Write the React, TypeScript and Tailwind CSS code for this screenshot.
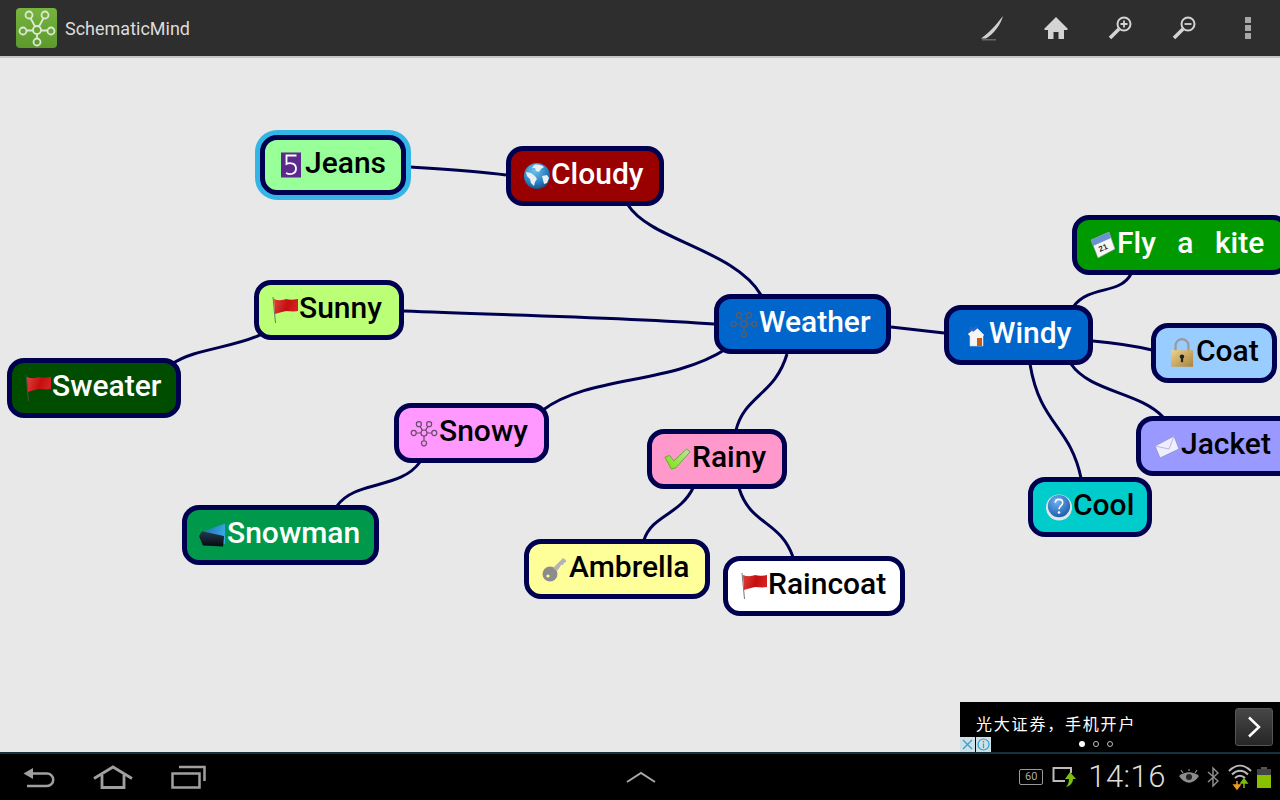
import React from "react";

const Net = ({ c = "#5f5f5f" }: { c?: string }) => (
  <svg viewBox="0 0 30 30" className="w-[30px] h-[30px] -ml-[2px]" fill="none" stroke={c} strokeWidth="1.3">
    <circle cx="15" cy="15" r="3.2" />
    <circle cx="9.5" cy="5.5" r="2.7" />
    <circle cx="20.5" cy="5.5" r="2.7" />
    <circle cx="4" cy="15" r="2.7" />
    <circle cx="26" cy="15" r="2.7" />
    <circle cx="15" cy="26" r="2.7" />
    <path d="M13.4 12.2 10.8 8M16.6 12.2 19.2 8M11.8 15H6.7M18.2 15h5.1M15 18.2v5.1" />
  </svg>
);
const Five = () => (
  <svg viewBox="0 0 26 26" className="w-[26px] h-[26px]">
    <rect x="3" y="0.5" width="20" height="25" fill="#5b2a8c" />
    <path d="M18.5 3.5H8.5V12c3.5-1.6 9.5-1 9.5 4.5 0 6-6.500 6.500-10 4.500" fill="none" stroke="#fff" strokeWidth="1.8" />
  </svg>
);
const Globe = () => (
  <svg viewBox="0 0 26 26" className="w-[26px] h-[26px]">
    <defs>
      <radialGradient id="gl" cx="0.4" cy="0.3" r="0.8">
        <stop offset="0" stopColor="#6cc4ee" />
        <stop offset="0.6" stopColor="#2a80c4" />
        <stop offset="1" stopColor="#10426f" />
      </radialGradient>
    </defs>
    <circle cx="13" cy="13" r="13" fill="url(#gl)" />
    <path d="M10 2c4-1 8 0 10 2l-3 2-2 3-3-1-1-3-3 0zM2 9l5 1 4 3 2 3-2 3-1 4-3-3-1-4-3-3zM18 13l5-1 2 3-2 5-3 1-1-4z" fill="#e8eef2" />
  </svg>
);
const Flag = () => (
  <svg viewBox="0 0 26 26" className="w-[26px] h-[26px]">
    <defs>
      <linearGradient id="fl" x1="0" y1="0" x2="1" y2="0.2">
        <stop offset="0" stopColor="#e04040" />
        <stop offset="0.6" stopColor="#c40f0f" />
        <stop offset="1" stopColor="#d42020" />
      </linearGradient>
    </defs>
    <path d="M1 0 3.500 26" stroke="#555" strokeWidth="0.8" />
    <path d="M2 2c5 2 9 1 12 0 3 1 7 1 12 0v12c-5 1-8 0-12 0-4 1-8 2-11 3z" fill="url(#fl)" />
  </svg>
);
const HomeIc = () => (
  <svg viewBox="0 0 26 26" className="w-[26px] h-[26px]">
    <path d="M6 12 14 5l8 8-1 1v10H8V14z" fill="#f4f4f4" stroke="#cfd8e6" strokeWidth="0.6" />
    <path d="M6 12 10 8.500V5H7.500v5z" fill="#2d62c8" />
    <path d="M9 6.500 14 4.500 16 6l-5 4z" fill="#2d62c8" />
    <rect x="15" y="16" width="5" height="8" fill="#c85a14" />
  </svg>
);
const Cal = () => (
  <svg viewBox="0 0 26 26" className="w-[26px] h-[26px]">
    <path d="M1 8 19 0l6 17-17 9z" fill="#f6f6f6" stroke="#999" strokeWidth="0.6" />
    <path d="M1 8 19 0l2 6-18 8z" fill="#6b93cf" />
    <text x="9" y="19" fontSize="8" fontFamily="Liberation Sans" fontWeight="700" fill="#333" transform="rotate(-24 12 17)">21</text>
  </svg>
);
const Lock = () => (
  <svg viewBox="0 0 26 32" className="w-[24px] h-[32px] mb-[2px]">
    <defs>
      <linearGradient id="lk" x1="0" y1="0" x2="1" y2="1">
        <stop offset="0" stopColor="#edd28c" />
        <stop offset="1" stopColor="#a9823c" />
      </linearGradient>
    </defs>
    <path d="M6 16V9a7 7 0 0 1 14 0v7" fill="none" stroke="#9a9a9a" strokeWidth="2.400" />
    <rect x="1" y="14" width="24" height="18" fill="url(#lk)" />
    <circle cx="13" cy="21" r="2.400" fill="#222" />
    <rect x="11.800" y="21" width="2.400" height="6" fill="#222" />
  </svg>
);
const Env = () => (
  <svg viewBox="0 0 26 26" className="w-[26px] h-[26px]">
    <path d="M1 13 20 3l5 13L6 25z" fill="#eeeeff" stroke="#8f8fc8" strokeWidth="0.8" />
    <path d="M1 13 15 16 20 3" fill="none" stroke="#b0b0dc" strokeWidth="0.9" />
  </svg>
);
const Q = () => (
  <svg viewBox="0 0 28 30" className="w-[28px] h-[30px]">
    <defs>
      <radialGradient id="qg" cx="0.4" cy="0.3" r="0.8">
        <stop offset="0" stopColor="#6fb2f0" />
        <stop offset="1" stopColor="#1553a8" />
      </radialGradient>
    </defs>
    <circle cx="14" cy="15.500" r="14" fill="#dfe6ea" />
    <circle cx="14" cy="14" r="12" fill="url(#qg)" />
    <path d="M10 10.500c0-5 8-5 8 0 0 3-4 3-4 7" fill="none" stroke="#fff" strokeWidth="1.700" />
    <circle cx="14" cy="21" r="1.400" fill="#fff" />
  </svg>
);
const Check = () => (
  <svg viewBox="0 0 30 26" className="w-[30px] h-[26px] -ml-[1px]">
    <defs>
      <linearGradient id="ck" x1="0" y1="1" x2="1" y2="0">
        <stop offset="0" stopColor="#7ee010" />
        <stop offset="1" stopColor="#b8e8a0" />
      </linearGradient>
    </defs>
    <path d="M1 11 6 9l5 6L25 2l4 3-16 18-5 1z" fill="url(#ck)" stroke="#4a9c10" strokeWidth="0.8" />
  </svg>
);
const Key = () => (
  <svg viewBox="0 0 26 26" className="w-[26px] h-[26px]">
    <circle cx="8" cy="18" r="7.500" fill="#8c8c8c" />
    <circle cx="6" cy="20" r="1.600" fill="#ffff99" />
    <path d="M11 12 21 2l3 2 0 2-2 1-1 2-2 0-1 2-3 4z" fill="#b4b4b4" />
  </svg>
);
const Folder = () => (
  <svg viewBox="0 0 28 26" className="w-[28px] h-[26px] -ml-[1px]">
    <defs>
      <linearGradient id="fd" x1="0" y1="0" x2="1" y2="0.4">
        <stop offset="0" stopColor="#1c6ea8" />
        <stop offset="1" stopColor="#38a8e8" />
      </linearGradient>
      <linearGradient id="fe" x1="0" y1="0" x2="0" y2="1">
        <stop offset="0" stopColor="#243a50" />
        <stop offset="1" stopColor="#050a10" />
      </linearGradient>
    </defs>
    <path d="M5 9 27 1v21H22z" fill="url(#fd)" />
    <path d="M0 14l3-5 23 5-1 11-21-1z" fill="url(#fe)" />
  </svg>
);

const nodes: { t: string; cls: string; text: string; icon: React.ReactNode; extra?: string; ring?: boolean }[] = [
  { t: "Jeans", cls: "left-[260px] top-[79px] w-[146px] bg-[#99ff99] text-black", text: "", icon: <Five />, ring: true },
  { t: "Cloudy", cls: "left-[506px] top-[90px] w-[158px] bg-[#990000] text-white", text: "", icon: <Globe /> },
  { t: "Sunny", cls: "left-[254px] top-[224px] w-[150px] bg-[#bbff77] text-black", text: "", icon: <Flag /> },
  { t: "Weather", cls: "left-[714px] top-[238px] w-[177px] bg-[#0066cc] text-white", text: "", icon: <Net /> },
  { t: "Windy", cls: "left-[944px] top-[249px] w-[149px] bg-[#0066cc] text-white", text: "", icon: <HomeIc /> },
  { t: "Fly a kite", cls: "left-[1072px] top-[159px] w-[218px] bg-[#009900] text-white [word-spacing:14px]", text: "", icon: <Cal /> },
  { t: "Coat", cls: "left-[1151px] top-[267px] w-[126px] bg-[#99ccff] text-black", text: "", icon: <Lock /> },
  { t: "Jacket", cls: "left-[1136px] top-[360px] w-[160px] bg-[#9999ff] text-black", text: "", icon: <Env /> },
  { t: "Cool", cls: "left-[1028px] top-[421px] w-[124px] bg-[#00cccc] text-black", text: "", icon: <Q /> },
  { t: "Rainy", cls: "left-[647px] top-[373px] w-[140px] bg-[#ff99cc] text-black", text: "", icon: <Check /> },
  { t: "Ambrella", cls: "left-[524px] top-[483px] w-[186px] bg-[#ffff99] text-black", text: "", icon: <Key /> },
  { t: "Raincoat", cls: "left-[723px] top-[500px] w-[182px] bg-white text-black", text: "", icon: <Flag /> },
  { t: "Sweater", cls: "left-[7px] top-[302px] w-[174px] bg-[#004d00] text-white", text: "", icon: <Flag /> },
  { t: "Snowy", cls: "left-[394px] top-[347px] w-[155px] bg-[#ff99ff] text-black", text: "", icon: <Net c="#6b4a6b" /> },
  { t: "Snowman", cls: "left-[182px] top-[449px] w-[197px] bg-[#00994c] text-white", text: "", icon: <Folder /> },
];

const edges = [
  "M411 167C445 169 480 171 506 175",
  "M628 205C650 240 735 250 761 295",
  "M404 311C500 315 620 317 714 324",
  "M262 334C235 348 195 348 172 364",
  "M726 349C670 385 590 375 543 410",
  "M787 354C775 395 745 395 736 430",
  "M891 327C910 329 925 331 944 333",
  "M1074 306C1090 285 1120 295 1131 274",
  "M1093 341C1115 343 1135 346 1152 350",
  "M1071 364C1090 392 1140 392 1163 417",
  "M1030 364C1040 425 1070 425 1081 478",
  "M420 462C400 490 355 480 337 506",
  "M693 488C680 515 652 515 644 540",
  "M739 488C750 525 780 520 793 557",
];

function Node({ n }: { n: (typeof nodes)[number] }) {
  return (
    <div
      className={`absolute h-[60px] box-border flex items-center whitespace-nowrap rounded-[17px] border-[5px] border-[#000050] pl-[13px] ${n.cls} ${
        n.ring ? "shadow-[0_0_0_5px_#33b5e5]" : ""
      }`}
    >
      <span className="w-[26px] h-[26px] mr-[1px] shrink-0 flex items-center justify-center">{n.icon}</span>
      <span className="text-[30px] leading-[36px] font-medium pb-[5px]">{n.t}</span>
    </div>
  );
}

export default function App() {
  return (
    <div className="w-[1280px] h-[800px] flex flex-col overflow-hidden font-['Roboto',sans-serif] bg-black">
      <header className="h-[56px] shrink-0 bg-[#2e2e2e] flex items-center pl-[16px] pr-[29px]">
        <svg viewBox="0 0 41 41" className="w-[41px] h-[41px]">
          <defs>
            <linearGradient id="lg" x1="0" y1="0" x2="0" y2="1">
              <stop offset="0" stopColor="#77b43e" />
              <stop offset="1" stopColor="#5b9a2c" />
            </linearGradient>
          </defs>
          <rect x="0" y="0" width="41" height="40" rx="4" fill="url(#lg)" />
          <g fill="none" stroke="#dfe8d8" strokeWidth="1.800">
            <circle cx="21" cy="22" r="4" />
            <circle cx="13" cy="7" r="3.500" />
            <circle cx="29" cy="7" r="3.500" />
            <circle cx="7" cy="23" r="3.500" />
            <circle cx="35" cy="23" r="3.500" />
            <circle cx="21" cy="34" r="3.500" />
            <path d="M19 18.500 14.500 10M23 18.500 27.500 10M17 22.500H10.500M25 22.500H31.500M21 26v4.500" />
          </g>
        </svg>
        <span className="ml-[8px] text-[18px] text-[#dcdcdc]">SchematicMind</span>
        <div className="ml-auto flex items-center gap-[40px]">
          <svg viewBox="0 0 24 26" className="w-[24px] h-[26px]">
            <path d="M1 23.500C8 19 16 10 23 1c-2 8-9 18-17 22.500z" fill="#d0d0d0" />
            <rect x="2" y="24" width="14" height="1.500" fill="#666" />
          </svg>
          <svg viewBox="0 0 24 24" className="w-[24px] h-[24px]">
            <path d="M12 1 24 13l-1 1h-3v9h-5.500v-7h-5v7H4v-9H1L0 13z" fill="#d4d4d4" />
          </svg>
          <svg viewBox="0 0 24 24" className="w-[24px] h-[24px]" fill="none" stroke="#d4d4d4">
            <circle cx="16" cy="8" r="6.500" strokeWidth="2" />
            <path d="M11 13 2 22" strokeWidth="3.500" />
            <path d="M12.500 8h7M16 4.500v7" strokeWidth="1.800" />
          </svg>
          <svg viewBox="0 0 24 24" className="w-[24px] h-[24px]" fill="none" stroke="#d4d4d4">
            <circle cx="16" cy="8" r="6.500" strokeWidth="2" />
            <path d="M11 13 2 22" strokeWidth="3.500" />
            <path d="M12.500 8h7" strokeWidth="1.800" />
          </svg>
          <div className="ml-[9px] flex flex-col gap-[2px]">
            <div className="w-[6px] h-[6px] bg-[#a8a8a8]" />
            <div className="w-[6px] h-[6px] bg-[#a8a8a8]" />
            <div className="w-[6px] h-[6px] bg-[#a8a8a8]" />
          </div>
        </div>
      </header>

      <main className="relative flex-1 bg-[#e8e8e8] border-t-0 overflow-hidden">
        <div className="h-[2px] bg-[#c4c4c4]" />
        <svg viewBox="0 56 1280 696" className="absolute left-0 top-0 w-[1280px] h-[696px]" fill="none" stroke="#000050" strokeWidth="3">
          {edges.map((d) => (
            <path key={d} d={d} />
          ))}
        </svg>
        {nodes.map((n) => (
          <Node key={n.t} n={n} />
        ))}

        <aside className="absolute right-0 bottom-0 w-[320px] h-[50px] bg-black">
          <div className="absolute left-[16px] top-[11px] text-[16px] leading-[20px] tracking-[1.8px] text-white font-['Noto_Sans_CJK_SC',sans-serif]">
            光大证券，手机开户
          </div>
          <div className="absolute left-[275px] top-[6px] w-[38px] h-[38px] rounded-[3px] border border-[#555] bg-gradient-to-b from-[#474747] to-[#262626] flex items-center justify-center">
            <svg viewBox="0 0 14 22" className="w-[14px] h-[22px]" fill="none" stroke="#fff" strokeWidth="2.500">
              <path d="M2 1.500 12 11 2 20.500" />
            </svg>
          </div>
          <div className="absolute left-[119px] top-[39px] flex items-center gap-[8px]">
            <span className="w-[6px] h-[6px] rounded-full bg-white" />
            <span className="w-[6px] h-[6px] rounded-full border border-[#bbb]" />
            <span className="w-[6px] h-[6px] rounded-full border border-[#bbb]" />
          </div>
          <div className="absolute left-0 bottom-0 flex gap-[1px]">
            <div className="w-[15px] h-[15px] bg-[#cfdfe6] flex items-center justify-center">
              <svg viewBox="0 0 11 11" className="w-[11px] h-[11px]" stroke="#2aa3cf" strokeWidth="1.200">
                <path d="M1 1l9 9M10 1l-9 9" />
              </svg>
            </div>
            <div className="w-[15px] h-[15px] bg-[#cfdfe6] flex items-center justify-center">
              <svg viewBox="0 0 13 13" className="w-[13px] h-[13px]" fill="none" stroke="#2aa3cf" strokeWidth="1.200">
                <circle cx="6.500" cy="6.500" r="5.500" />
                <path d="M6.500 5.500v4.500M6.500 3v1.500" />
              </svg>
            </div>
          </div>
        </aside>
      </main>

      <footer className="h-[48px] shrink-0 bg-black border-t-2 border-[#16323f] flex items-center pl-[23px] pr-[9px]">
        <svg viewBox="0 0 32 21" className="w-[32px] h-[21px]" fill="none" stroke="#a0a0a0" strokeWidth="2.500">
          <path d="M4 6.500H24a6 6 0 0 1 0 12.500H4" />
          <path d="M0.500 6.500 10 1v11z" fill="#a0a0a0" stroke="none" />
        </svg>
        <svg viewBox="0 0 40 24" className="ml-[38px] w-[40px] h-[24px]" fill="none" stroke="#a0a0a0" strokeWidth="2.800">
          <path d="M1 13.500 20 2l19 11.500" />
          <path d="M9 10v12.500h22V10" />
        </svg>
        <svg viewBox="0 0 35 24" className="ml-[38px] w-[35px] h-[24px]" fill="none" stroke="#a0a0a0" strokeWidth="2.500">
          <rect x="1.500" y="8.500" width="27" height="14" />
          <path d="M8 2h25.500v14" />
        </svg>
        <svg viewBox="0 0 30 12" className="ml-[420px] w-[30px] h-[12px]" fill="none" stroke="#a8a8a8" strokeWidth="2">
          <path d="M1 11 15 2l14 9" />
        </svg>
        <div className="ml-auto flex items-center">
          <div className="w-[24px] h-[16px] border border-[#999] rounded-[2px] text-[11px] leading-[14px] text-center text-[#aaa]">60</div>
          <svg viewBox="0 0 24 22" className="ml-[9px] w-[24px] h-[22px]" fill="none">
            <path d="M13 15H1.500V2H19v5" stroke="#bbb" strokeWidth="2" />
            <path d="M18 6l6 7h-3c0 4-3 7-7 8 2-2 3-5 3-8h-4z" fill="#7cbd10" />
          </svg>
          <span className="ml-[12px] text-[31px] leading-[36px] font-light text-[#dcdcdc] tracking-[0.5px]">14:16</span>
          <svg viewBox="0 0 22 16" className="ml-[12px] w-[22px] h-[16px]">
            <path d="M1 7c6-5 14-5 20 0-6 9-14 9-20 0z" fill="#8c8c8c" />
            <circle cx="11" cy="8" r="3" fill="#222" />
            <path d="M3 1l2 3M11 0v2M19 1l-2 3" stroke="#8c8c8c" strokeWidth="1.200" />
          </svg>
          <svg viewBox="0 0 12 22" className="ml-[7px] w-[12px] h-[22px]" fill="none" stroke="#8c8c8c" strokeWidth="1.500">
            <path d="M1 6 11 15 6 20V2l5 5-10 9" />
          </svg>
          <svg viewBox="0 0 24 26" className="ml-[9px] w-[24px] h-[26px]">
            <g fill="none" stroke="#b8b8b8" strokeWidth="2">
              <path d="M1 7c7-7 15-7 22 0M4 10.500c5-5 11-5 16 0M7 14c3-3 7-3 10 0" />
            </g>
            <path d="M9 17v6M6 21l3 4 3-4z" stroke="#f09a20" strokeWidth="1.500" fill="#f09a20" />
            <path d="M16 24v-6M13 19l3-4 3 4z" stroke="#7cbd10" strokeWidth="1.500" fill="#7cbd10" />
          </svg>
          <div className="ml-[5px] w-[14px] h-[21px] flex flex-col items-center">
            <div className="w-[6px] h-[2px] bg-[#555]" />
            <div className="w-[14px] flex-1 bg-[#444] flex flex-col justify-end">
              <div className="h-[13px] bg-[#88c000]" />
            </div>
          </div>
        </div>
      </footer>
    </div>
  );
}
